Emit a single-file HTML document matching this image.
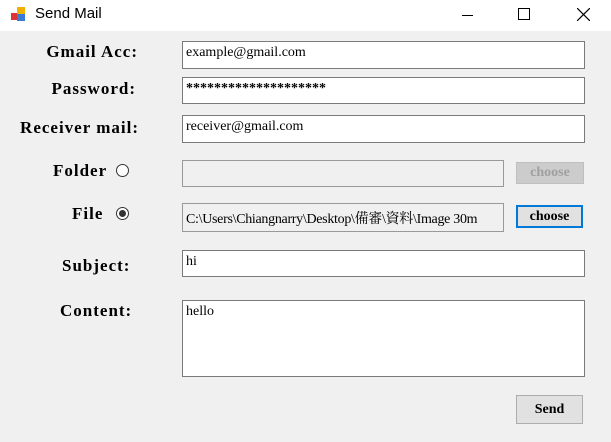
<!DOCTYPE html><html><head><style>
body{margin:0;width:611px;height:442px;background:#f0f0f0;position:relative;overflow:hidden;font-family:"Liberation Serif","Noto Serif CJK SC",serif}
.t{position:absolute;left:0;top:0;width:611px;height:31px;background:#fff}
.l{position:absolute;font-weight:bold;font-size:17px;letter-spacing:1px;color:#000;white-space:nowrap}
.b{position:absolute;left:182px;width:403px;background:#fff;border:1px solid #7a7a7a;font-size:14px;padding:3px 3px;box-sizing:border-box;white-space:nowrap;overflow:hidden}
.btn{position:absolute;font-weight:bold;font-size:14px;text-align:center;box-sizing:border-box}
.r{position:absolute;width:13px;height:13px;border:1px solid #333;border-radius:50%;box-sizing:border-box;background:#fff}
</style></head><body>
<div class="t">
<svg style="position:absolute;left:10px;top:6px" width="18" height="18"><rect x="1" y="7" width="6" height="7" fill="#d33"/><rect x="7" y="1" width="8" height="7" fill="#f0b000"/><rect x="7" y="8" width="8" height="7" fill="#3a7bd5"/></svg>
<div style="position:absolute;left:35px;top:5px;font-family:'Liberation Sans',sans-serif;font-size:15px">Send Mail</div>
<div style="position:absolute;left:462px;top:15px;width:11px;height:1px;background:#000"></div>
<div style="position:absolute;left:518px;top:8px;width:10px;height:10px;border:1px solid #000"></div>
<svg style="position:absolute;left:577px;top:8px" width="13" height="13"><path d="M0 0L13 13M13 0L0 13" stroke="#000" stroke-width="1.2"/></svg>
</div>
<div class="l" style="right:473px;top:42px">Gmail Acc:</div>
<div class="l" style="right:475px;top:79px">Password:</div>
<div class="l" style="right:472px;top:118px">Receiver mail:</div>
<div class="l" style="left:53px;top:161px">Folder</div>
<div class="r" style="left:116px;top:164px"></div>
<div class="l" style="left:72px;top:204px">File</div>
<div class="r" style="left:116px;top:207px"><div style="position:absolute;left:2px;top:2px;width:7px;height:7px;border-radius:50%;background:#333"></div></div>
<div class="l" style="left:62px;top:256px">Subject:</div>
<div class="l" style="left:60px;top:301px">Content:</div>
<div class="b" style="top:41px;height:28px">example@gmail.com</div>
<div class="b" style="top:77px;height:27px;font-weight:bold">********************</div>
<div class="b" style="top:115px;height:28px">receiver@gmail.com</div>
<div class="b" style="top:160px;height:27px;width:322px;background:#f0f0f0;border-color:#999"></div>
<div class="b" style="top:203px;height:29px;width:322px;background:#f0f0f0;border-color:#999;padding-top:4px;letter-spacing:-0.3px">C:\Users\Chiangnarry\Desktop\備審\資料\Image 30m</div>
<div class="b" style="top:250px;height:27px">hi</div>
<div class="b" style="top:300px;height:77px">hello</div>
<div class="btn" style="left:516px;top:162px;width:68px;height:22px;background:#ccc;border:1px solid #bfbfbf;color:#a0a0a0;line-height:20px">choose</div>
<div class="btn" style="left:516px;top:205px;width:67px;height:23px;background:#e1e1e1;border:2px solid #0078d7;line-height:19px">choose</div>
<div class="btn" style="left:516px;top:395px;width:67px;height:29px;background:#e1e1e1;border:1px solid #adadad;line-height:27px">Send</div>
</body></html>
